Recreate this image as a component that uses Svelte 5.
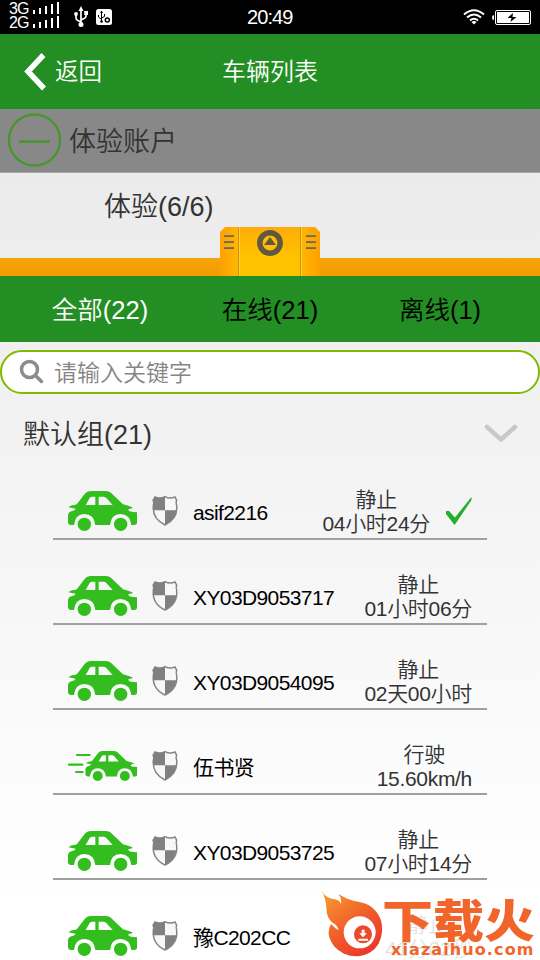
<script>
  const tabs = [
    { label: '全部(22)', active: true },
    { label: '在线(21)' },
    { label: '离线(1)' }
  ];
  const vehicles = [
    { name: 'asif2216', state: '静止', detail: '04小时24分', checked: true },
    { name: 'XY03D9053717', state: '静止', detail: '01小时06分' },
    { name: 'XY03D9054095', state: '静止', detail: '02天00小时' },
    { name: '伍书贤', state: '行驶', detail: '15.60km/h', moving: true },
    { name: 'XY03D9053725', state: '静止', detail: '07小时14分' },
    { name: '豫C202CC', state: '静止', detail: '41分02秒' }
  ];
  const bars = [4, 6, 8, 10, 12];
</script>

{#snippet signal(label)}
  <div class="signal">
    <span>{label}</span>
    <svg width="28" height="13">
      {#each bars as h, i}
        <rect x={1 + i * 6} y={12 - h} width="2" height={h} fill="#fff" />
      {/each}
    </svg>
  </div>
{/snippet}

{#snippet carBody()}
  <path d="M55 82 L65 76 L75 75 L81 72 L104 42 Q111 33 123 33 H165 Q174 33 181 37 L219 73 L237 78 Q246 81 249 84 L235 88 Q235 96 250 96 L261 97 V130 Q260 135 252 135 H244 Q240 102 211 102 Q183 103 180 135 H136 Q132 102 103 102 Q75 103 72 135 H63 Q54 134 54 126 V104 Q55 97 64 94 Q74 92 77 86 Z M107 75 H136 V50 H127 Q122 50 119 54 Z M146 75 H188 L169 54 Q165 50 160 50 H146 Z" fill-rule="evenodd" />
  <circle cx="103" cy="133" r="20" />
  <circle cx="212" cy="133" r="20" />
{/snippet}

<div class="screen">
  <div class="status">
    <div class="signals">{@render signal('3G')}{@render signal('2G')}</div>
    <svg class="usb" width="14" height="22" viewBox="0 0 14 22" fill="none" stroke="#fff" stroke-width="1.7">
      <path d="M7 4V18M2 9V12Q2 14 4 14.500L7 16M12 7V10Q12 12 10 12.500L7 14" />
      <path d="M7 0L9.500 5H4.500Z" fill="#fff" stroke="none" />
      <circle cx="7" cy="18.500" r="2.500" fill="#fff" stroke="none" />
      <circle cx="2" cy="8" r="1.900" fill="#fff" stroke="none" />
      <path d="M10.200 5H14V9H10.200Z" fill="#fff" stroke="none" />
    </svg>
    <svg class="debug" width="16" height="16" viewBox="0 0 16 16">
      <rect width="16" height="16" rx="2.500" fill="#fff" />
      <path d="M5.500 3V13M2.500 6V8L5.500 10.500M8.500 5V7.500L5.500 9" fill="none" stroke="#000" />
      <path d="M5.500 1.500L7 4H4Z" />
      <circle cx="5.500" cy="12.500" r="1.300" />
      <circle cx="11.300" cy="11" r="2" fill="none" stroke="#000" stroke-width="1.500" />
    </svg>
    <span class="clock">20:49</span>
    <svg class="wifi" width="22" height="16" viewBox="0 0 22 16" fill="none" stroke="#fff" stroke-width="2">
      <path d="M1 5.500Q11 -3 21 5.500M4 8.500Q11 2.500 18 8.500M7 11.500Q11 8 15 11.500" />
      <path d="M8.500 13Q11 11 13.500 13L11 15.500Z" fill="#fff" stroke="none" />
    </svg>
    <svg width="39" height="15" viewBox="0 0 39 15">
      <path d="M2 5Q0 5 0 7.500Q0 10 2 10Z" fill="#fff" />
      <rect x="3.500" y=".5" width="35" height="14" rx="1.500" fill="none" stroke="#fff" />
      <rect x="5" y="2" width="32" height="11" fill="#fff" />
      <path d="M21 3L15.500 8H19.500L18.500 12L24.500 7H20.500Z" />
    </svg>
  </div>

  <header>
    <div class="back">
      <svg width="22" height="38" viewBox="0 0 22 38"><path d="M19.500 2L4 18.500L20 35.500" fill="none" stroke="#fff" stroke-width="5.500" /></svg>
      <span>返回</span>
    </div>
    <h1>车辆列表</h1>
  </header>

  <div class="account">
    <svg width="54" height="54" viewBox="0 0 54 54" fill="none" stroke="#47962e">
      <circle cx="26.500" cy="27" r="25.500" stroke-width="2.400" />
      <path d="M11 28.500H42" stroke-width="2.500" />
    </svg>
    <span>体验账户</span>
  </div>

  <div class="trial"><span>体验(6/6)</span></div>
  <div class="drawer">
    <svg class="handle" width="100" height="50" viewBox="0 0 100 50">
      <defs>
        <linearGradient id="side"><stop offset="0" stop-color="#ff9f00" /><stop offset=".19" stop-color="#ffb800" /><stop offset=".81" stop-color="#ffb800" /><stop offset="1" stop-color="#ff9f00" /></linearGradient>
        <linearGradient id="shine" x2="0" y2="1"><stop stop-color="#ffac08" /><stop offset=".65" stop-color="#ffc400" /></linearGradient>
      </defs>
      <path d="M0 50V6L5 1H95L100 6V50Z" fill="url(#side)" />
      <rect x="19" y="1" width="62" height="49" fill="url(#shine)" />
      <path d="M5 1.500H95" stroke="#ffa51b" />
      <path d="M18.500 1V50M80.500 1V50" stroke="#cf9208" />
      <path d="M19.500 1V50M81.500 1V50" stroke="#ffd23c" />
      <path d="M4 10H14M4 16H14M4 22H14M86 10H96M86 16H96M86 22H96" stroke="#7c6930" stroke-width="1.800" />
      <path d="M4 8.700H14M4 14.700H14M4 20.700H14M86 8.700H96M86 14.700H96M86 20.700H96" stroke="#d8b04c" />
      <circle cx="50" cy="17" r="10.200" fill="#ffbd0a" stroke="#62583f" stroke-width="5.500" />
      <path d="M50 11L56 19H44Z" fill="#62583f" />
    </svg>
  </div>

  <nav>
    {#each tabs as tab}
      <div class="tab" class:active={tab.active}>{tab.label}</div>
    {/each}
  </nav>

  <div class="search">
    <svg width="26" height="26" viewBox="0 0 26 26" fill="none" stroke="#8c8c8c">
      <circle cx="10.500" cy="10.500" r="8" stroke-width="3.500" />
      <path d="M16.500 16.500L22.500 22.500" stroke-width="3.500" stroke-linecap="round" />
    </svg>
    <span>请输入关键字</span>
  </div>

  <div class="group">
    <span>默认组(21)</span>
    <svg width="34" height="20" viewBox="0 0 34 20"><path d="M3 3L17 15.500L31 3" fill="none" stroke="#c8c8c8" stroke-width="4.500" stroke-linecap="round" stroke-linejoin="round" /></svg>
  </div>

  <ul>
    {#each vehicles as v}
      <li>
        <svg class="car" width="112" height="44" viewBox="51 27 336 132" fill="#34bd1e">
          {#if v.moving}
            <g transform="translate(66 23) scale(.748 .75)">{@render carBody()}</g>
            <path d="M81 60H119M57 89H97M78 111H98" stroke="#34bd1e" stroke-width="6.500" stroke-linecap="round" />
          {:else}
            {@render carBody()}
          {/if}
          <path d="M315 51Q330 58 345 50Q360 58 375 51L380 61Q377 66 380 76Q384 116 345 135Z" fill="#f7f7f7" />
          <path d="M315 51Q330 58 345 50Q360 58 375 51L380 61Q377 66 380 76Q384 116 345 135Q306 116 310 76Q313 66 309 61Z" fill="#f7f7f7" stroke="#858585" stroke-width="4.500" />
          <path d="M345 50Q330 58 315 51L309 61Q313 66 310 76Q308 83 310 91H345Z M345 91H379Q376 120 345 135Z" fill="#808080" />
        </svg>
        <span class="name">{v.name}</span>
        <div class="state"><span>{v.state}</span><span>{v.detail}</span></div>
        {#if v.checked}
          <svg class="check" width="26" height="29" viewBox="0 0 26 29"><path d="M0 14L3 14L9 20.500L25.500 0V3L10 26L8.500 28L0 17Z" fill="#22b02c" /></svg>
        {/if}
      </li>
    {/each}
  </ul>

  <div class="watermark">
    <svg width="64" height="70" viewBox="30 27 192 210">
      <defs><linearGradient id="flame" x2=".7" y2="1"><stop stop-color="#f9a12d" /><stop offset=".65" stop-color="#f0562a" /><stop offset="1" stop-color="#eb382b" /></linearGradient></defs>
      <path d="M35 30Q45 54 69 57Q88 59 93 72Q96 57 86 42Q116 62 145 65Q178 69 199 95Q219 119 216 156Q212 197 181 217Q144 238 102 221Q67 204 58 172Q52 151 63 132Q76 146 86 151Q82 135 68 128Q50 116 49 83Q48 59 35 30Z" fill="url(#flame)" />
      <circle cx="149" cy="157" r="48" fill="#fff" />
      <circle cx="159" cy="163" r="27" fill="#ee492b" />
      <path d="M155 149H164V160H171L159 172L148 160H155ZM145 176H174V182H145Z" fill="#fff" />
    </svg>
    <div class="brand"><b>下载火</b><span>xiazaihuo.com</span></div>
  </div>
</div>

<style>
  :global(body) { margin: 0; overflow: hidden; }
  .screen { position: relative; width: 540px; height: 960px; overflow: hidden; display: flex; flex-direction: column; background: linear-gradient(#e9e9e9, #ebebeb 173px, #fff 900px); font-family: "Liberation Sans", "Noto Sans CJK SC", sans-serif; font-weight: 350; color: #333; }
  .screen > * { flex-shrink: 0; box-sizing: border-box; }
  span, h1, .tab { white-space: nowrap; }
  svg { display: block; flex: none; }
  .status { height: 34px; background: #000; color: #fff; display: flex; align-items: center; padding: 0 8px 0 9px; }
  .signals { width: 65px; margin-top: -3px; }
  .signal { display: flex; align-items: center; height: 14px; font-size: 16px; line-height: 14px; gap: 2px; }
  .signal span { width: 21px; letter-spacing: -.8px; }
  .debug { margin-left: 8px; }
  .clock { margin-left: 135px; width: 47px; font-size: 20px; letter-spacing: -.9px; }
  .wifi { margin-left: 169px; margin-right: 7px; }
  header { height: 75px; background: #238e23; color: #fff; display: grid; grid-template-columns: 1fr auto 1fr; align-items: center; }
  .back { display: flex; align-items: center; padding-left: 24px; gap: 9px; font-size: 23.500px; }
  .back span { padding-bottom: 4px; }
  h1 { margin: 0; padding-bottom: 4px; font-size: 24px; font-weight: 350; }
  .account { height: 64px; background: #888; border-bottom: 1px solid #aaa; display: flex; align-items: center; padding-left: 8px; gap: 7px; font-size: 27px; }
  .account svg { margin-bottom: 1px; }
  .account span { padding-bottom: 2px; }
  .trial { height: 85px; padding: 14px 0 0 104px; font-size: 27px; line-height: 40px; }
  .drawer { position: relative; height: 18px; background: linear-gradient(#f5a50c, #f29c00); }
  .handle { position: absolute; left: 220px; bottom: 0; }
  nav { height: 66px; background: #238e23; color: #000; display: flex; align-items: center; padding: 0 15px 3px; }
  .tab { flex: 1; text-align: center; font-size: 25.500px; }
  .tab.active { color: #fff; }
  .search { height: 44px; margin-top: 8px; border: 2px solid #7fba00; border-radius: 22px; background: #fff; display: flex; align-items: center; padding-left: 17px; gap: 9px; font-size: 23px; color: #858585; }
  .search span { padding-bottom: 2px; }
  .group { height: 61px; display: flex; align-items: center; justify-content: space-between; padding: 18px 22px 0 23px; font-size: 27px; line-height: 40px; }
  .group span { padding-top: 2px; }
  ul { list-style: none; margin: 0 53px; padding: 0; }
  li { height: 85px; box-sizing: border-box; border-bottom: 2px solid #a0a0a0; display: flex; align-items: flex-end; padding: 0 15px 4px 14px; }
  .car { margin-bottom: 1px; }
  .name { flex: 1; margin: 0 0 -1px 14px; color: #000; font-size: 21px; line-height: 44px; letter-spacing: -.6px; }
  .name:not(:empty) { font-weight: 400; }
  .state { display: flex; flex-direction: column; align-items: center; font-size: 21px; line-height: 24px; letter-spacing: -.3px; margin-bottom: -2px; }
  .check { margin: 0 0 8px 16px; }
  .watermark { position: absolute; left: 320px; top: 889px; width: 220px; height: 71px; display: flex; background: rgba(255, 255, 255, .86); color: #f1652a; }
  .brand { display: flex; flex-direction: column; margin-left: -2px; }
  .brand b { font: 900 51px/54px "Noto Sans CJK SC", sans-serif; height: 52px; transform: scaleY(.89); transform-origin: 0 100%; }
  .brand span { font: 700 16px/18px "DejaVu Sans", sans-serif; letter-spacing: 1.100px; margin-left: 9px; }
</style>
